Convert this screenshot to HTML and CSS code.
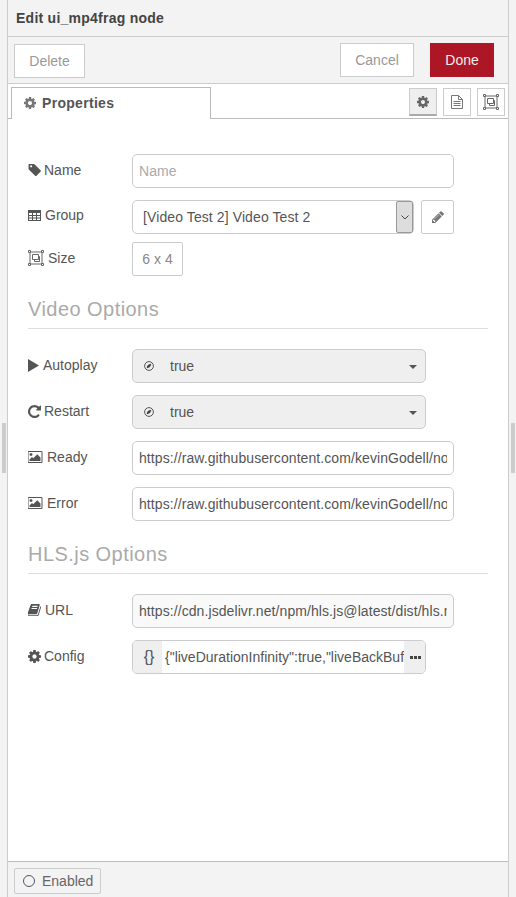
FILE: index.html
```html
<!DOCTYPE html>
<html lang="en">
<head>
<meta charset="utf-8">
<title>Edit ui_mp4frag node</title>
<link rel="stylesheet" href="styles.css">
</head>
<body>
<svg class="defs" aria-hidden="true">
  <symbol id="cog" viewBox="128 128 1536 1536"><path d="M1152 896q0-106-75-181t-181-75-181 75-75 181 75 181 181 75 181-75 75-181zm512-109v222q0 12-8 23t-20 13l-185 28q-19 54-39 91 35 50 107 138 10 12 10 25t-9 23q-27 37-99 108t-94 71q-12 0-26-9l-138-108q-44 23-91 38-16 136-29 186-7 28-36 28h-222q-14 0-24.5-8.5t-11.5-21.5l-28-184q-49-16-90-37l-141 107q-10 9-25 9-14 0-25-11-126-114-165-168-7-10-7-23 0-12 8-23 15-21 51-66.5t54-70.5q-27-50-41-99l-183-27q-13-2-21-12.5t-8-23.5v-222q0-12 8-23t19-13l186-28q14-46 39-92-40-57-107-138-10-12-10-24 0-10 9-23 26-36 98.5-107.5t94.5-71.5q13 0 26 10l138 107q44-23 91-38 16-136 29-186 7-28 36-28h222q14 0 24.5 8.5t11.5 21.5l28 184q49 16 90 37l142-107q9-9 24-9 13 0 25 10 129 119 165 170 7 8 7 22 0 12-8 23-15 21-51 66.5t-54 70.5q26 50 41 98l183 28q13 2 21 12.5t8 23.5z"/></symbol>
  <symbol id="tag" viewBox="64 192 1600 1408"><path d="M576 448q0-53-37.5-90.5t-90.5-37.5-90.5 37.5-37.5 90.5 37.5 90.5 90.5 37.5 90.5-37.5 37.5-90.5zm1067 576q0 53-37 90l-491 492q-39 37-91 37-53 0-90-37l-715-716q-38-37-64.5-101t-26.5-117v-416q0-52 38-90t90-38h416q53 0 117 26.5t102 64.5l715 714q37 39 37 91z"/></symbol>
  <symbol id="table" viewBox="0 0 13 11"><path fill-rule="evenodd" d="M0 0h13v11H0zM1 3v2h3V3zm4 0v2h3V3zm4 0v2h3V3zM1 6v1.500h3V6zm4 0v1.500h3V6zm4 0v1.500h3V6zM1 8.500V10h3V8.500zm4 0V10h3V8.500zm4 0V10h3V8.500z"/></symbol>
  <symbol id="sizer" viewBox="0 0 16 16"><path class="line" d="M2 2h12v12H2zM4.500 4.500h6v5h-6zM6.500 9.500v2h5v-5h-1"/><path class="corner" d="M.5.500h2v2h-2zM13.500.500h2v2h-2zM.5 13.500h2v2h-2zM13.500 13.500h2v2h-2z"/></symbol>
  <symbol id="play" viewBox="0 0 11 13"><path d="M0 0l11 6.500-11 6.500z"/></symbol>
  <symbol id="repeat" viewBox="128 128 1536 1536"><path d="M1664 256v448q0 26-19 45t-45 19h-448q-42 0-59-40-17-39 14-69l138-138q-148-137-349-137-104 0-198.5 40.5t-163.5 109.5-109.5 163.5-40.5 198.5 40.5 198.5 109.5 163.5 163.5 109.5 198.5 40.5q119 0 225-52t179-147q7-10 23-12 15 0 25 9l137 138q9 8 9.500 20.500t-7.500 22.500q-109 132-264 204.500t-327 72.500q-156 0-298-61t-245-164-164-245-61-298 61-298 164-245 245-164 298-61q147 0 284.500 55.500t244.500 156.500l130-129q29-31 70-14 39 17 39 59z"/></symbol>
  <symbol id="picture" viewBox="0 128 1920 1536"><path d="M576 576q0 80-56 136t-136 56-136-56-56-136 56-136 136-56 136 56 56 136zm1024 384v448h-1408v-192l320-320 160 160 512-512zm96-704h-1600q-13 0-22.500 9.500t-9.500 22.500v1216q0 13 9.500 22.500t22.500 9.500h1600q13 0 22.500-9.500t9.500-22.500v-1216q0-13-9.500-22.500t-22.500-9.500zm160 32v1216q0 66-47 113t-113 47h-1600q-66 0-113-47t-47-113v-1216q0-66 47-113t113-47h1600q66 0 113 47t47 113z"/></symbol>
  <symbol id="book" viewBox="64 192 1600 1408"><path d="M1639 478q40 57 18 129l-275 906q-19 64-76.500 107.500t-122.500 43.500h-923q-77 0-148.500-53.500t-99.500-131.500q-24-67-2-127 0-4 3-27t4-37q1-8-3-21.500t-3-19.500q2-11 8-21t16.500-23.500 16.500-23.500q23-38 45-91.500t30-91.500q3-10 .5-30t-.5-28q3-11 17-28t17-23q21-36 42-92t25-90q1-9-2.500-32t.5-28q4-13 22-30.500t22-22.500q19-26 42.500-84.500t27.500-96.500q1-8-3-25.500t-2-26.500q2-8 9-18t18-23 17-21q8-12 16.500-30.500t15-35 16-36 19.500-32 26.500-23.500 36-11.500 47.500 5.500l-1 3q38-9 51-9h761q74 0 114 56t18 130l-274 906q-36 119-71.500 153.500t-128.500 34.500h-869q-27 0-38 15-11 16-1 43 24 70 144 70h923q29 0 56-15.500t35-41.500l300-987q7-22 5-57 38 15 59 43zm-1064 2q-4 13 2 22.500t20 9.500h608q13 0 25.500-9.500t16.500-22.500l21-64q4-13-2-22.500t-20-9.500h-608q-13 0-25.500 9.500t-16.500 22.500zm-83 256q-4 13 2 22.500t20 9.500h608q13 0 25.500-9.500t16.500-22.500l21-64q4-13-2-22.500t-20-9.500h-608q-13 0-25.500 9.500t-16.500 22.500z"/></symbol>
  <symbol id="pencil" viewBox="128 128 1536 1536"><path d="M491 1536l91-91-235-235-91 91v107h128v128h107zm523-928q0-22-22-22-10 0-17 7l-542 542q-7 7-7 17 0 22 22 22 10 0 17-7l542-542q7-7 7-17zm-54-192l416 416-832 832h-416v-416zm683 96q0 53-37 90l-166 166-416-416 166-165q36-38 90-38 53 0 91 38l235 234q37 39 37 91z"/></symbol>
  <symbol id="bool" viewBox="0 0 10 10"><circle class="bool-ring" cx="5" cy="5" r="4.400"/><path d="M2.800 7.200Q2.400 3.600 7.300 2.700 6.800 6.800 2.800 7.200z"/></symbol>
</svg>
<div class="handle handle-left"></div>
<div class="handle handle-right"></div>
<main class="tray">
  <header class="tray-title">Edit ui_mp4frag node</header>
  <div class="toolbar">
    <button class="btn btn-delete" type="button">Delete</button>
    <div class="toolbar-right">
      <button class="btn btn-cancel" type="button">Cancel</button>
      <button class="btn btn-done" type="button">Done</button>
    </div>
  </div>
  <div class="tabbar">
    <div class="tab"><svg class="ico ico-tab"><use href="#cog"/></svg>Properties</div>
    <div class="tab-actions">
      <span class="tab-btn tab-btn-on"><svg class="ico ico-btn"><use href="#cog"/></svg></span>
      <span class="tab-btn"><svg class="doc" viewBox="0 0 12 14"><path d="M.5.500h7l4 4v9H.5zM7.500.500v4h4M2.500 6.500h7M2.500 8.500h7M2.500 10.500h7"/></svg></span>
      <span class="tab-btn"><svg class="ico ico-size"><use href="#sizer"/></svg></span>
    </div>
  </div>
  <form class="form">
    <div class="row">
      <label class="lbl"><svg class="ico ico-tag"><use href="#tag"/></svg>Name</label>
      <input class="input" type="text" placeholder="Name">
    </div>
    <div class="row row-tight">
      <label class="lbl lbl-up"><svg class="ico ico-table"><use href="#table"/></svg>Group</label>
      <div class="select">
        <span>[Video Test 2] Video Test 2</span>
        <span class="select-arrow"><svg viewBox="0 0 8 5"><path d="M.5.500L4 4 7.500.500"/></svg></span>
      </div>
      <span class="edit"><svg class="ico ico-pencil"><use href="#pencil"/></svg></span>
    </div>
    <div class="row">
      <label class="lbl lbl-size"><svg class="ico ico-size"><use href="#sizer"/></svg>Size</label>
      <div class="size">6 x 4</div>
    </div>
    <h3 class="section">Video Options</h3>
    <div class="row">
      <label class="lbl"><svg class="ico ico-play"><use href="#play"/></svg>Autoplay</label>
      <div class="typed"><svg class="bool"><use href="#bool"/></svg><span>true</span><i class="caret"></i></div>
    </div>
    <div class="row">
      <label class="lbl"><svg class="ico ico-cog"><use href="#repeat"/></svg>Restart</label>
      <div class="typed"><svg class="bool"><use href="#bool"/></svg><span>true</span><i class="caret"></i></div>
    </div>
    <div class="row">
      <label class="lbl"><svg class="ico ico-pic"><use href="#picture"/></svg>Ready</label>
      <input class="input" type="text" value="https://raw.githubusercontent.com/kevinGodell/node-red-contrib-ui-mp4frag/master/ready.png">
    </div>
    <div class="row">
      <label class="lbl"><svg class="ico ico-pic"><use href="#picture"/></svg>Error</label>
      <input class="input" type="text" value="https://raw.githubusercontent.com/kevinGodell/node-red-contrib-ui-mp4frag/master/error.png">
    </div>
    <h3 class="section">HLS.js Options</h3>
    <div class="row">
      <label class="lbl"><svg class="ico ico-book"><use href="#book"/></svg>URL</label>
      <input class="input input-soft" type="text" value="https://cdn.jsdelivr.net/npm/hls.js@latest/dist/hls.min.js">
    </div>
    <div class="row">
      <label class="lbl"><svg class="ico ico-cog"><use href="#cog"/></svg>Config</label>
      <div class="json">
        <span class="json-type">{}</span>
        <input class="json-text" type="text" value='{"liveDurationInfinity":true,"liveBackBufferLength":5}'>
        <span class="json-more"><i></i><i></i><i></i></span>
      </div>
    </div>
  </form>
  <footer class="tray-foot">
    <button class="enabled" type="button"><span class="ring"></span>Enabled</button>
  </footer>
</main>
</body>
</html>
```
FILE: styles.css
```css
* { box-sizing: border-box; }
html, body { height: 100%; }
body {
  margin: 0;
  background: #f3f3f3;
  padding: 0 7px;
  font-family: "Liberation Sans", Arial, sans-serif;
  font-size: 14px;
  color: #555;
  overflow: hidden;
}
.defs { display: none; }
.handle {
  position: absolute;
  top: 423px;
  width: 4px;
  height: 50px;
  background: #ccc;
}
.handle-left { left: 2px; }
.handle-right { left: 511px; }
.ico {
  width: 13px;
  height: 13px;
  fill: #555;
  flex: none;
}
.ico-tag { width: 13px; height: 12px; margin-right: 1px; }
.ico-table { width: 13px; height: 11px; margin-right: 2px; }
.ico-play { width: 11px; height: 13px; margin-right: 2px; }
.ico-cog { margin-right: 1px; }
.ico-pic { width: 15px; height: 12px; margin-right: 2px; }
.ico-book { width: 13px; height: 12px; margin-right: 2px; }
.ico-size { width: 16px; height: 16px; margin-right: 4px; }
.tray {
  height: 100%;
  display: flex;
  flex-direction: column;
  background: #fff;
  border-left: 1px solid #ccc;
  border-right: 1px solid #ccc;
}
.tray-title {
  height: 37px;
  padding: 11px 8px 0;
  background: #f3f3f3;
  border-bottom: 1px solid #ccc;
  font-weight: bold;
  line-height: 15px;
  letter-spacing: .25px;
  color: #444;
}
.toolbar {
  height: 47px;
  flex: none;
  display: flex;
  justify-content: space-between;
  padding: 6px 14px 0 6px;
  background: #f3f3f3;
  border-bottom: 1px solid #ccc;
}
.toolbar-right { display: flex; gap: 16px; }
.btn {
  height: 34px;
  border: 1px solid #ccc;
  background: #fff;
  color: #999;
  font: 14px "Liberation Sans", Arial, sans-serif;
  padding: 0;
}
.btn-delete { width: 71px; margin-top: 1px; }
.btn-cancel { width: 74px; }
.btn-done { width: 64px; background: #ad1625; border-color: #ad1625; color: #eee; }
.tabbar {
  height: 35px;
  flex: none;
  display: flex;
  justify-content: space-between;
  padding: 3px 3px 0;
  border-bottom: 1px solid #bbb;
}
.tab {
  width: 200px;
  height: 32px;
  margin-bottom: -1px;
  display: flex;
  align-items: center;
  gap: 6px;
  padding: 0 0 1px 12px;
  background: #fff;
  border: 1px solid #bbb;
  border-bottom: none;
  font-weight: bold;
  letter-spacing: .3px;
  color: #555;
}
.ico-tab { width: 12px; height: 12px; fill: #777; }
.tab-actions { display: flex; gap: 6px; margin-top: 1px; }
.tab-btn {
  width: 28px;
  height: 28px;
  display: flex;
  align-items: center;
  justify-content: center;
  border: 1px solid #ccc;
  background: #fff;
}
.tab-btn .ico-size { margin-right: 0; }
.tab-btn-on { background: #efefef; border-bottom: 2px solid #aaa; }
.ico-btn { width: 12px; height: 12px; fill: #666; }
.doc { width: 12px; height: 14px; fill: none; stroke: #777; stroke-width: 1; }
.line { fill: none; stroke: #666; stroke-width: 1; }
.corner { fill: #fff; stroke: #666; stroke-width: 1; }
.form {
  flex: 1;
  padding: 35px 20px 0 20px;
  min-height: 0;
}
.row {
  display: flex;
  height: 34px;
  margin-bottom: 12px;
}
.row-tight { margin-bottom: 8px; }
.lbl {
  width: 104px;
  flex: none;
  display: flex;
  align-items: center;
  gap: 2px;
  height: 32px;
}
.lbl-up { height: 30px; }
.lbl-size { height: 32px; gap: 0; }
.input {
  width: 322px;
  height: 34px;
  padding: 0 6px;
  border: 1px solid #ccc;
  border-radius: 5px;
  background: #fff;
  color: #555;
  font: 14px "Liberation Sans", Arial, sans-serif;
  letter-spacing: .08px;
  outline: none;
}
.input::placeholder { color: #aaa; opacity: 1; }
.input-soft { background: #f9f9f9; }
.select {
  width: 282px;
  height: 34px;
  display: flex;
  align-items: center;
  justify-content: space-between;
  padding: 1px 0 1px 10px;
  border: 1px solid #ccc;
  border-radius: 5px;
  letter-spacing: .1px;
}
.select-arrow {
  width: 17px;
  height: 32px;
  display: flex;
  align-items: center;
  justify-content: center;
  background: #ddd;
  border: 1px solid #999;
  border-radius: 2px;
}
.select-arrow svg { width: 8px; height: 5px; fill: none; stroke: #444; stroke-width: 1; }
.edit {
  width: 33px;
  height: 34px;
  margin-left: 7px;
  display: flex;
  align-items: center;
  justify-content: center;
  border: 1px solid #ccc;
  border-radius: 2px;
}
.ico-pencil { width: 12px; height: 12px; fill: #777; }
.size {
  width: 51px;
  height: 34px;
  display: flex;
  align-items: center;
  justify-content: center;
  border: 1px solid #ccc;
  border-radius: 2px;
  color: #888;
}
.section {
  height: 53px;
  margin: -12px 0 20px;
  padding-top: 22px;
  border-bottom: 1px solid #ddd;
  font-size: 20px;
  font-weight: normal;
  line-height: 22px;
  letter-spacing: .45px;
  color: #aaa;
}
.typed {
  width: 294px;
  height: 34px;
  display: flex;
  align-items: center;
  padding-left: 11px;
  position: relative;
  background: #efefef;
  border: 1px solid #ccc;
  border-radius: 5px;
}
.bool {
  width: 10px;
  height: 10px;
  margin-right: 16px;
  fill: #444;
}
.bool-ring { fill: none; stroke: #444; stroke-width: .9; }
.caret {
  position: absolute;
  right: 8px;
  top: 15px;
  border-top: 4px solid #555;
  border-left: 4px solid transparent;
  border-right: 4px solid transparent;
}
.json {
  width: 294px;
  height: 34px;
  display: flex;
  align-items: center;
  overflow: hidden;
  border: 1px solid #ccc;
  border-radius: 5px;
}
.json-type {
  width: 29px;
  height: 100%;
  flex: none;
  display: flex;
  align-items: center;
  justify-content: center;
  padding-left: 3px;
  background: #efefef;
  font-size: 16px;
}
.json-text {
  flex: 1;
  min-width: 0;
  height: 100%;
  padding: 0 0 0 3px;
  border: none;
  outline: none;
  color: #555;
  font: 14px "Liberation Sans", Arial, sans-serif;
}
.json-more {
  width: 21px;
  height: 100%;
  flex: none;
  display: flex;
  align-items: center;
  justify-content: center;
  gap: 1px;
  padding-left: 2px;
  background: #efefef;
}
.json-more i { width: 3px; height: 3px; background: #444; }
.tray-foot {
  height: 36px;
  flex: none;
  padding: 6px 6px 0;
  background: #f3f3f3;
  border-top: 1px solid #bbb;
}
.enabled {
  width: 87px;
  height: 26px;
  display: flex;
  align-items: center;
  gap: 7px;
  padding: 0 0 0 8px;
  border: 1px solid #ccc;
  border-radius: 2px;
  background: #f3f3f3;
  color: #666;
  font: 14px "Liberation Sans", Arial, sans-serif;
}
.ring { width: 12px; height: 12px; border: 1px solid #556; border-radius: 50%; }
```
